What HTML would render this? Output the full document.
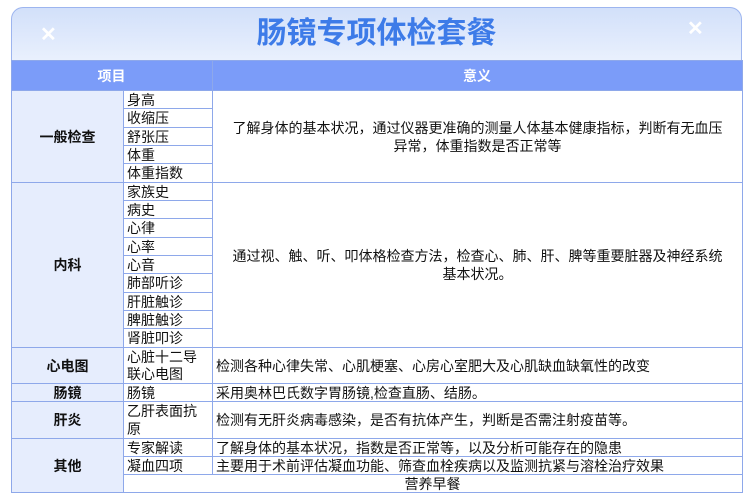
<!DOCTYPE html>
<html><head><meta charset="utf-8"><style>
html,body{margin:0;padding:0;background:#fff;width:750px;height:502px;overflow:hidden;font-family:"Liberation Sans","Noto Sans CJK SC",sans-serif;}
.card{position:absolute;left:11px;top:7px;width:731px;}
.hd{height:53px;border-radius:12px 12px 0 0;background:linear-gradient(#d2e0fa,#e9f0fd);border:1px solid #9db5ef;border-bottom:none;box-sizing:border-box;position:relative;text-align:center;}
.hd h1{margin:0;font-size:30px;line-height:52px;color:#3d7be8;font-weight:bold;}
.x{position:absolute;color:#fff;font-size:20px;font-weight:bold;}
table{border-collapse:collapse;width:731px;table-layout:fixed;font-size:14px;color:#111;}
td,th{border:1px solid #8ea8ea;padding:0 4px 0 3px;line-height:16px;overflow:hidden;white-space:nowrap;}
th{background:#7b9cf9;color:#fff;height:29px;font-size:14px;}
.c{background:#e6edfd;text-align:center;font-weight:bold;padding:0;}
.m{text-align:center;padding:0 4px;}
</style></head><body>
<div class="card">
<div class="hd"><span class="x" style="left:28px;top:14px">✕</span><span class="x" style="left:675px;top:8px">✕</span><h1>肠镜专项体检套餐</h1></div>
<table>
<colgroup><col style="width:112px"><col style="width:89px"><col style="width:530px"></colgroup>
<tr><th colspan="2">项目</th><th>意义</th></tr>
<tr style="height:18px"><td class="c" rowspan="5">一般检查</td><td>身高</td><td class="m" rowspan="5" style="line-height:18px">了解身体的基本状况，通过仪器更准确的测量人体基本健康指标，判断有无血压<br>异常，体重指数是否正常等</td></tr>
<tr style="height:19px"><td>收缩压</td></tr>
<tr style="height:18px"><td>舒张压</td></tr>
<tr style="height:18px"><td>体重</td></tr>
<tr style="height:19px"><td>体重指数</td></tr>
<tr style="height:18px"><td class="c" rowspan="9">内科</td><td>家族史</td><td class="m" rowspan="9" style="line-height:18px">通过视、触、听、叩体格检查方法，检查心、肺、肝、脾等重要脏器及神经系统<br>基本状况。</td></tr>
<tr style="height:18px"><td>病史</td></tr>
<tr style="height:19px"><td>心律</td></tr>
<tr style="height:18px"><td>心率</td></tr>
<tr style="height:18px"><td>心音</td></tr>
<tr style="height:19px"><td>肺部听诊</td></tr>
<tr style="height:18px"><td>肝脏触诊</td></tr>
<tr style="height:18px"><td>脾脏触诊</td></tr>
<tr style="height:19px"><td>肾脏叩诊</td></tr>
<tr style="height:36px"><td class="c">心电图</td><td style="line-height:17px">心脏十二导<br>联心电图</td><td>检测各种心律失常、心肌梗塞、心房心室肥大及心肌缺血缺氧性的改变</td></tr>
<tr style="height:18px"><td class="c">肠镜</td><td>肠镜</td><td>采用奥林巴氏数字胃肠镜,检查直肠、结肠。</td></tr>
<tr style="height:37px"><td class="c">肝炎</td><td style="line-height:18px">乙肝表面抗<br>原</td><td>检测有无肝炎病毒感染，是否有抗体产生，判断是否需注射疫苗等。</td></tr>
<tr style="height:18px"><td class="c" rowspan="3">其他</td><td>专家解读</td><td>了解身体的基本状况，指数是否正常等，以及分析可能存在的隐患</td></tr>
<tr style="height:18px"><td>凝血四项</td><td>主要用于术前评估凝血功能、筛查血栓疾病以及监测抗紧与溶栓治疗效果</td></tr>
<tr style="height:18px"><td colspan="2" style="text-align:center">营养早餐</td></tr>
</table>
</div>
</body></html>
